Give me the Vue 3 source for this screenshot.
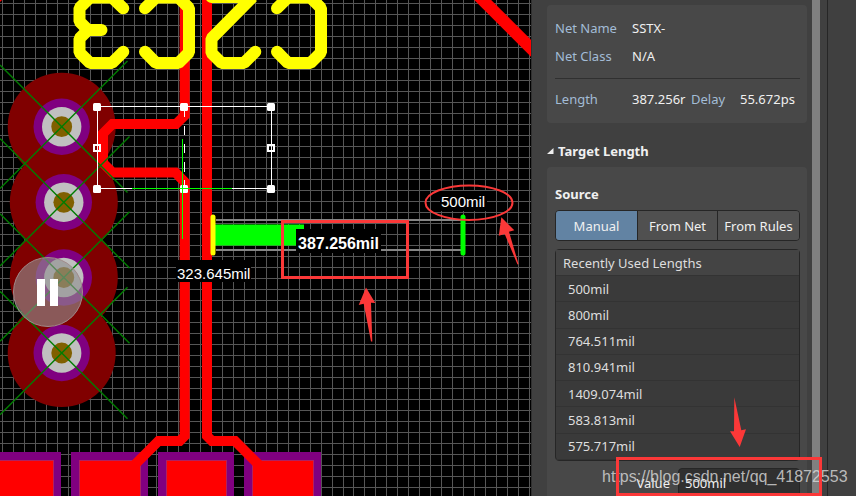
<script setup>
import { ref } from 'vue'

const columns = Array.from({ length: 120 }, (_, k) => Math.floor(2.9 + 10.971 * k) + 0.5)
const rows = Array.from({ length: 90 }, (_, k) => 3.5 + 11 * k)

const vias = [
  { x: 61.7, y: 126.7, end: 127.5 },
  { x: 63.8, y: 202.3, end: 129.5 },
  { x: 63.8, y: 277.5, end: 129.5 },
  { x: 61.7, y: 353, end: 127.5 }
]
const pads = [
  { x: -16, w: 77 },
  { x: 71, w: 77 },
  { x: 158, w: 76 },
  { x: 244, w: 77 }
]
const handles = [
  [97, 107], [184, 107], [271, 107],
  [97, 189], [184, 189], [271, 189]
]
const sources = ['Manual', 'From Net', 'From Rules']
const source = ref('Manual')
const lengths = ['500mil', '800mil', '764.511mil', '810.941mil', '1409.074mil', '583.813mil', '575.717mil']
const value = ref('500mil')
</script>

<template>
  <div class="app">
    <main class="board">
      <svg class="board-art" viewBox="0 0 531 496" preserveAspectRatio="xMinYMin slice" role="img" aria-label="PCB layout">
        <g class="grid">
          <line v-for="x in columns" :key="'c' + x" :x1="x" :x2="x" y1="0" y2="1000" />
          <line v-for="y in rows" :key="'r' + y" x1="0" x2="1320" :y1="y" :y2="y" />
        </g>

        <g>
          <circle v-for="v in vias" :key="'m' + v.y" class="mask" :cx="v.x" :cy="v.y" r="54" />
          <g v-for="v in vias" :key="'v' + v.y">
            <circle class="ring" :cx="v.x" :cy="v.y" r="28.2" />
            <circle class="metal" :cx="v.x" :cy="v.y" r="19.7" />
            <circle class="hole" :cx="v.x" :cy="v.y" r="10.4" />
          </g>
        </g>

        <g v-for="p in pads" :key="'p' + p.x">
          <rect class="ring" :x="p.x" y="452" :width="p.w" height="60" />
          <rect class="pad" :x="p.x + 8.5" y="460.5" :width="p.w - 16" height="60" />
        </g>

        <g class="trace">
          <path d="M184.7 -5V115.500L176 124H112.500L103 133.500V163L112.500 172.500H175.500L184.700 182V436L179.700 441H158.500L130 469.500" />
          <path d="M207 -5V436L212 441H235L263 469" />
          <path class="wide" d="M472.700 -10L542.700 60" />
        </g>
        <path d="M0 0H2L0 2Z" fill="#f00" />

        <g class="cross">
          <g v-for="v in vias" :key="'x' + v.y">
            <line x1="0" :y1="v.y - v.x" :x2="v.end" :y2="v.y - v.x + v.end" />
            <line x1="0" :y1="v.y + v.x" :x2="v.end" :y2="v.y + v.x - v.end" />
          </g>
        </g>

        <g class="silk">
          <path d="M123.300 8.300L112 -2.500H90L79.500 8V21.500L88 30L79.500 38.500V52.500L90 63H112L123.300 51.800M88 30H101.500" />
          <path d="M145 8.300L156 -2.500H178.500L189 8V52.500L178.500 63H156L145 51.800" />
          <path d="M211.500 -3H252.500L211.500 38.500V53L221.500 63H244L255.300 51.800" />
          <path d="M277 8.300L288 -2.500H310.500L321 8V52.500L310.500 63H288L277 51.800" />
        </g>

        <g class="selection">
          <rect x="97.500" y="106.500" width="174" height="82" />
          <path d="M184.500 107V117M184.500 126V135M184.500 144V153M184.500 162V172M184.500 180V188" />
          <path class="origin" d="M132 188.500H232M182.500 139V239" />
          <rect v-for="h in handles" :key="h.join()" class="handle" :x="h[0] - 4" :y="h[1] - 4" width="8" height="8" rx="1.500" />
          <path class="origin" d="M180 188.500H188M182.500 185V193" />
          <rect class="hollow" x="94" y="145" width="6" height="6" />
          <rect class="hollow" x="268" y="145" width="6" height="6" />
        </g>

        <g class="gauge">
          <path class="rail" d="M216 220H463M216 250H461" />
          <rect x="215" y="224.500" width="89" height="21" fill="#0f0" />
          <line x1="213" y1="217" x2="213" y2="253" stroke="#ff0" />
          <line x1="463" y1="217" x2="463" y2="253" stroke="#0f0" />
        </g>

        <g class="readout">
          <rect x="296" y="229" width="85" height="24" />
          <rect x="176" y="260" width="75" height="22" />
          <rect x="440" y="191" width="47" height="20" />
          <text class="current" x="298" y="249">387.256mil</text>
          <text x="177" y="279">323.645mil</text>
          <text x="441" y="207">500mil</text>
        </g>

        <g class="pause">
          <circle cx="48" cy="292" r="34.500" />
          <path d="M37 279H45V306H37ZM50 279H58V306H50Z" />
        </g>

        <g class="note">
          <rect x="282.500" y="221.500" width="125" height="56" />
          <ellipse cx="469" cy="202.700" rx="43.500" ry="17.300" />
          <path d="M366 287.500L358.700 305L363.700 303.700L371 341.500H372.300L371 302.700L375.300 303Z" />
          <path d="M501.300 217.300L498.800 235.700L504.700 234L517.500 264.500L518.500 264L509 231.700L514.300 230.300Z" />
        </g>
      </svg>
    </main>

    <aside class="panel">
      <div class="content">
        <section class="card net">
          <dl class="pairs">
            <dt>Net Name</dt>
            <dd>SSTX-</dd>
            <dt>Net Class</dt>
            <dd>N/A</dd>
          </dl>
          <dl class="measures">
            <dt>Length</dt>
            <dd>387.256r</dd>
            <dt>Delay</dt>
            <dd>55.672ps</dd>
          </dl>
        </section>

        <h2 class="heading">
          <svg class="caret" viewBox="0 0 7 6" aria-hidden="true"><path d="M6.500 0V6H0Z" fill="#eee" /></svg>
          Target Length
        </h2>

        <section class="card target">
          <h3 class="label">Source</h3>
          <div class="segments" role="group" aria-label="Source">
            <button v-for="s in sources" :key="s" type="button" :class="{ active: s === source }" :aria-pressed="s === source" @click="source = s">{{ s }}</button>
          </div>
          <table class="recent">
            <thead>
              <tr><th scope="col">Recently Used Lengths</th></tr>
            </thead>
            <tbody>
              <tr v-for="l in lengths" :key="l"><td>{{ l }}</td></tr>
            </tbody>
          </table>
          <div class="value-row">
            <label for="value">Value</label>
            <input id="value" v-model="value" type="text">
          </div>
        </section>
      </div>
      <div class="scroll"></div>
      <div class="gutter"></div>
      <svg class="overlay" aria-hidden="true">
        <text class="watermark" x="71" y="482">https://blog.csdn.net/qq_41872553</text>
        <g class="note">
          <rect x="86.500" y="458.500" width="203" height="36" />
          <path d="M203.300 397.300L203 431.300H199L208.700 447L215 429.300L210.300 430.300Z" />
        </g>
      </svg>
    </aside>
  </div>
</template>

<style>
body {
  margin: 0;
  background: #404040;
}
</style>

<style scoped>
.app {
  display: grid;
  grid-template-columns: minmax(0, 1fr) 325px;
  height: 100vh;
  overflow: hidden;
  font: 13px/18px "Noto Sans", "Open Sans", sans-serif;
  color: #f0f0f0;
}
.board {
  background: #000;
  overflow: hidden;
}
.board-art {
  display: block;
  width: 100%;
  height: 100%;
}
.grid { stroke: #565656; shape-rendering: crispEdges; }
.mask { fill: #800000; }
.ring { fill: #800080; }
.metal { fill: #c0c0c0; }
.hole { fill: #806000; }
.pad { fill: #f00; stroke: #b02060; }
.trace { fill: none; stroke: #f00; stroke-width: 10; }
.wide { stroke-width: 12; }
.cross { stroke: #007c00; stroke-width: 1.4; }
.silk {
  fill: none;
  stroke: #ff0;
  stroke-width: 12;
  stroke-linecap: round;
  stroke-linejoin: bevel;
}
.selection { fill: none; stroke: #fff; }
.selection .origin { stroke: #0f0; }
.selection .handle { fill: #fff; stroke: none; }
.selection .hollow { stroke-width: 2; }
.gauge line { stroke-width: 5; stroke-linecap: round; }
.rail { stroke: #858585; stroke-width: 2; }
.readout { font-family: "Liberation Sans", Arial, sans-serif; font-size: 15px; }
.readout rect { fill: #000; }
.readout text { fill: #fff; }
.readout .current { font-size: 16px; font-weight: 700; }
.pause circle { fill: rgba(143, 143, 143, 0.62); stroke: #a08a8a; }
.pause path { fill: #fff; }
.note rect,
.note ellipse { fill: none; stroke: #fb3838; stroke-width: 3; }
.note ellipse { stroke-width: 2; }
.note path { fill: #fb3838; }

.panel {
  position: relative;
  display: grid;
  grid-template-columns: minmax(0, 1fr) 8px 36px;
  background: #404040;
  overflow: hidden;
}
.content {
  padding: 5px 5px 0 15px;
  border-left: 1px solid #303030;
}
.scroll { background: #808080; }
.gutter { margin-left: 7px; border-left: 1px solid #262626; }
.card {
  padding: 0 7px 0 8px;
  background: #484848;
  border-radius: 4px;
}
.net { height: 118px; }
.pairs,
.measures { display: grid; margin: 0; }
.pairs {
  grid-template-columns: 77px 1fr;
  row-gap: 10px;
  padding: 14px 0 13px;
  border-bottom: 1px solid #303030;
}
.measures {
  grid-template-columns: 77px 59px 49px 1fr;
  padding-top: 11px;
}
dt { color: #a3bcd6; }
dd { margin: 0; white-space: nowrap; }
.heading {
  display: flex;
  align-items: center;
  gap: 4px;
  height: 18px;
  margin: 19px 0 7px;
  font-size: 13px;
  font-weight: 700;
}
.caret { width: 7px; height: 6px; }
.target { padding-top: 18px; height: 400px; }
.label { margin: 0 0 7px; font-size: 13px; line-height: 18px; }
.segments {
  display: grid;
  grid-template-columns: 81px 80px 1fr;
  height: 31px;
  box-sizing: border-box;
  border: 1px solid #262626;
  border-radius: 4px;
  overflow: hidden;
}
.segments button {
  padding: 0;
  border: 0;
  border-left: 1px solid #262626;
  background: #505050;
  color: #f0f0f0;
  font: inherit;
  white-space: nowrap;
}
.segments button:first-child { border-left: 0; }
.segments .active { background: #6283a3; }
.recent {
  width: 100%;
  height: 212px;
  margin-top: 8px;
  border: 1px solid #262626;
  border-radius: 4px;
  border-spacing: 0;
  background: #3a3a3a;
  color: #dedede;
}
.recent th,
.recent td {
  box-sizing: border-box;
  height: 26px;
  padding: 0 12px;
  border-bottom: 1px solid #333;
  text-align: left;
  font-weight: 400;
}
.recent th { padding: 0 7px; background: #444; }
.value-row {
  display: grid;
  grid-template-columns: 115px 1fr;
  column-gap: 8px;
  align-items: center;
  margin-top: 7px;
}
.value-row label { text-align: right; }
.value-row input {
  width: 100%;
  height: 30px;
  box-sizing: border-box;
  padding: 0 6px;
  border: 1px solid #262626;
  border-radius: 4px;
  background: #303030;
  color: #f0f0f0;
  font: inherit;
}
.overlay {
  position: absolute;
  inset: 0;
  width: 100%;
  height: 100%;
  pointer-events: none;
}
.watermark {
  fill: rgba(220, 220, 220, 0.8);
  font: 16px "Liberation Sans", Arial, sans-serif;
}
</style>
